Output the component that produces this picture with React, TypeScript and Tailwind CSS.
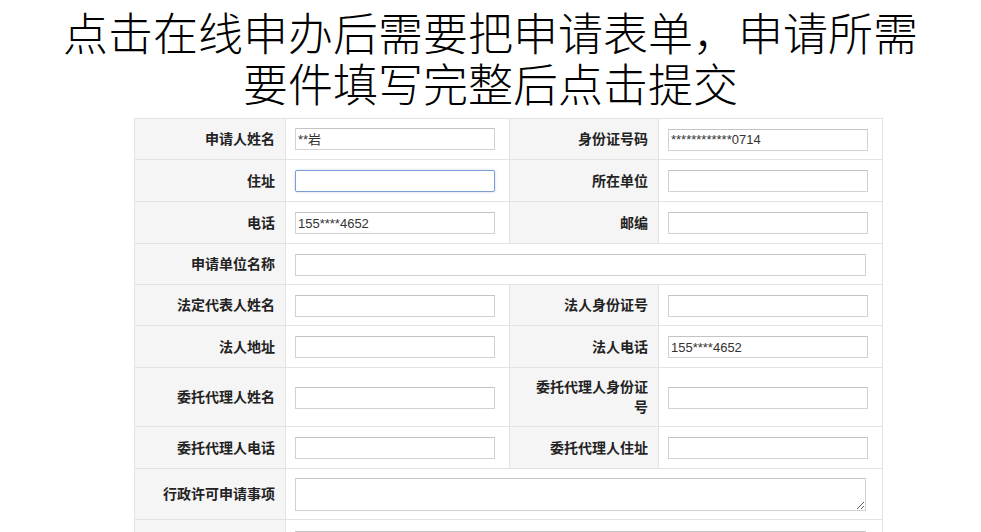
import React from "react";

const titleFont = { fontFamily: '"Noto Sans CJK SC", sans-serif' };

function Label({ children }: { children: React.ReactNode }) {
  return (
    <td className="bg-[#f5f5f5] border border-[#e3e3e3] text-right pr-[10px] pl-[14px] text-[14px] leading-[20px] font-bold text-[#222] whitespace-nowrap">
      {children}
    </td>
  );
}

function Field({
  value = "",
  focused = false,
  wide = false,
  colSpan,
}: {
  value?: string;
  focused?: boolean;
  wide?: boolean;
  colSpan?: number;
}) {
  return (
    <td colSpan={colSpan} className="bg-white border border-[#e3e3e3] pl-[9px]">
      <input
        readOnly
        value={value}
        className={
          (wide ? "w-[571px] " : "w-[200px] ") +
          "h-[22px] px-[2px] text-[13px] text-[#333] bg-white outline-none " +
          (focused
            ? "border border-[#7f9fd4] rounded-[2px] shadow-[0_0_2px_rgba(100,140,210,0.5)]"
            : "border border-[#d2d2d2] border-t-[#c4c4c4]")
        }
      />
    </td>
  );
}

export default function App() {
  return (
    <div
      className="w-[981px] h-[532px] bg-white overflow-hidden"
      style={{ fontFamily: '"Liberation Sans", "Noto Sans CJK SC", sans-serif' }}
    >
      <div className="pt-[6px] text-center text-[45px] font-light text-black" style={titleFont}>
        <div className="h-[51px] leading-[51px] overflow-visible">点击在线申办后需要把申请表单，申请所需</div>
        <div className="h-[51px] leading-[51px] overflow-visible">要件填写完整后点击提交</div>
      </div>
      <table className="ml-[134px] mt-[10px] w-[748px] table-fixed border-collapse">
        <colgroup>
          <col className="w-[151px]" />
          <col className="w-[224px]" />
          <col className="w-[149px]" />
          <col className="w-[224px]" />
        </colgroup>
        <tbody>
          <tr className="h-[41px]">
            <Label>申请人姓名</Label>
            <Field value="**岩" />
            <Label>身份证号码</Label>
            <Field value="************0714" />
          </tr>
          <tr className="h-[42px]">
            <Label>住址</Label>
            <Field focused />
            <Label>所在单位</Label>
            <Field />
          </tr>
          <tr className="h-[42px]">
            <Label>电话</Label>
            <Field value="155****4652" />
            <Label>邮编</Label>
            <Field />
          </tr>
          <tr className="h-[41px]">
            <Label>申请单位名称</Label>
            <Field wide colSpan={3} />
          </tr>
          <tr className="h-[41px]">
            <Label>法定代表人姓名</Label>
            <Field />
            <Label>法人身份证号</Label>
            <Field />
          </tr>
          <tr className="h-[42px]">
            <Label>法人地址</Label>
            <Field />
            <Label>法人电话</Label>
            <Field value="155****4652" />
          </tr>
          <tr className="h-[59px]">
            <Label>委托代理人姓名</Label>
            <Field />
            <Label>
              委托代理人身份证
              <br />号
            </Label>
            <Field />
          </tr>
          <tr className="h-[42px]">
            <Label>委托代理人电话</Label>
            <Field />
            <Label>委托代理人住址</Label>
            <Field />
          </tr>
          <tr className="h-[51px]">
            <Label>行政许可申请事项</Label>
            <td colSpan={3} className="bg-white border border-[#e3e3e3] pl-[9px] align-middle">
              <textarea
                readOnly
                className="block w-[571px] h-[33px] border border-[#d2d2d2] border-t-[#c4c4c4] bg-white outline-none resize"
              />
            </td>
          </tr>
          <tr className="h-[42px]">
            <Label>{"\u00a0"}</Label>
            <td colSpan={3} className="bg-white border border-[#e3e3e3] pl-[9px] align-top pt-[10px]">
              <input
                readOnly
                className="w-[571px] h-[22px] border border-[#d2d2d2] border-t-[#c4c4c4] bg-white outline-none"
              />
            </td>
          </tr>
        </tbody>
      </table>
    </div>
  );
}
